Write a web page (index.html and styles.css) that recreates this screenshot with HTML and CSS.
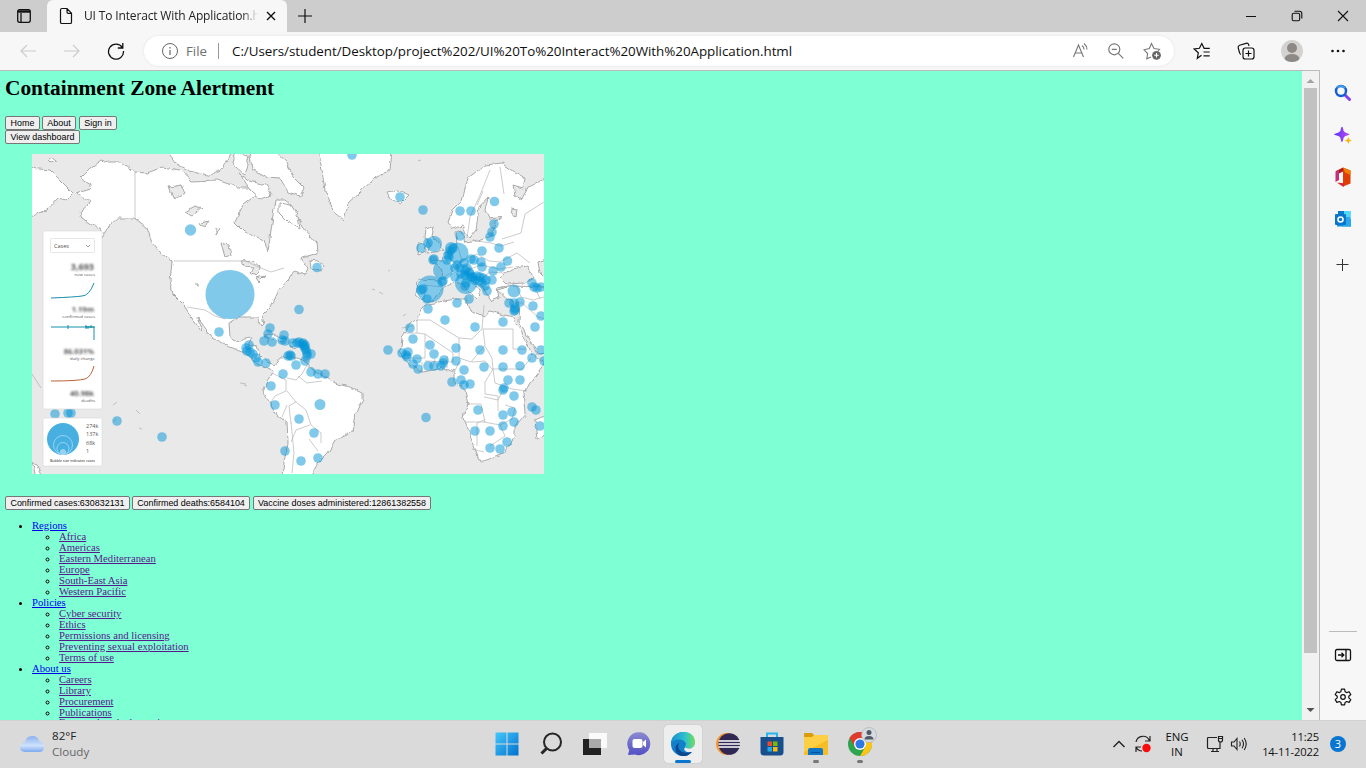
FILE: index.html
```html
<!DOCTYPE html>
<html lang="en">
<head>
<meta charset="utf-8">
<title>UI To Interact With Application</title>
<link rel="stylesheet" href="styles.css">
</head>
<body>
<div class="screen">
<header class="tabstrip">
  <div class="tab-menu"><svg width="16" height="16" viewBox="0 0 16 16" fill="none" stroke="#111" stroke-width="1.3"><rect x="1.7" y="1.7" width="12.6" height="12.6" rx="2"/><path d="M2 3.5h12" stroke-width="2.4"/><path d="M5 5v9"/></svg></div>
  <div class="tab">
    <svg width="14" height="18" viewBox="0 0 14 18" fill="none" stroke="#111" stroke-width="1.2"><path d="M3 1.5h5l4.5 4.7v9q0 1.3-1.3 1.3H3q-1.5 0-1.5-1.3V3q0-1.5 1.5-1.5zM8 1.500V5q0 1.400 1.300 1.400h3"/></svg>
    <span class="tab-title">UI To Interact With Application.html</span>
    <svg class="tab-close" width="10" height="10" viewBox="0 0 10 10" stroke="#111" stroke-width="1.4"><path d="M1 1l8 8M9 1L1 9"/></svg>
  </div>
  <svg class="new-tab" width="16" height="16" viewBox="0 0 16 16" stroke="#111" stroke-width="1.2"><path d="M8 1v14M1 8h14"/></svg>
  <div class="window-buttons">
    <span><svg width="12" height="12" viewBox="0 0 12 12" stroke="#111" stroke-width="1"><path d="M1 6.5h10"/></svg></span>
    <span><svg width="12" height="12" viewBox="0 0 12 12" fill="none" stroke="#111" stroke-width="1.1"><rect x="1.2" y="3.2" width="7.5" height="7.5" rx="1.5"/><path d="M3.5 1.2h5q2.3 0 2.3 2.3v5"/></svg></span>
    <span><svg width="12" height="12" viewBox="0 0 12 12" stroke="#111" stroke-width="1.1"><path d="M1 1l10 10M11 1L1 11"/></svg></span>
  </div>
</header>

<nav class="toolbar">
  <span class="nav-cell"><svg width="18" height="14" viewBox="0 0 18 14" fill="none" stroke="#ccc" stroke-width="1.2"><path d="M17 7H2M8 1L2 7l6 6"/></svg></span>
  <span class="nav-cell"><svg width="18" height="14" viewBox="0 0 18 14" fill="none" stroke="#ccc" stroke-width="1.2"><path d="M1 7h15M10 1l6 6-6 6"/></svg></span>
  <span class="nav-cell"><svg width="18" height="18" viewBox="0 0 18 18" fill="none" stroke="#111" stroke-width="1.3"><path d="M15.3 5.500A7.500 7.500 0 1 0 16.500 9M15.800 1v5h-5"/></svg></span>
  <div class="address">
    <svg width="18" height="18" viewBox="0 0 18 18" fill="none" stroke="#666" stroke-width="1"><circle cx="9" cy="9" r="7.5"/><path d="M9 8v5M9 5v1.4" stroke-width="1.2"/></svg>
    <span class="scheme">File</span><i class="divider"></i>
    <span class="url">C:/Users/student/Desktop/project%202/UI%20To%20Interact%20With%20Application.html</span>
    <div class="address-tools">
      <svg width="18" height="18" viewBox="0 0 18 18" fill="none" stroke="#777" stroke-width="1.1"><path d="M2.500 15L7.500 3l5 12M4.300 11h6.400M11 3.500q2 1.500 2 4M13 1.500q3 2.500 3 6"/></svg>
      <svg width="18" height="18" viewBox="0 0 18 18" fill="none" stroke="#777" stroke-width="1.2"><circle cx="7.300" cy="7.300" r="5.500"/><path d="M11.300 11.300l5 5M4.800 7.300h5"/></svg>
      <svg width="18" height="18" viewBox="0 0 18 18" fill="none" stroke="#777" stroke-width="1.1"><path d="M8 15l-4.200 1.800.8-5.300L1 7.800l5.300-1.300L8.500 1.500l2.500 5 5.500.8-1.500 1.700"/><circle cx="13.500" cy="13.300" r="4.400" fill="#666" stroke="none"/><path d="M13.500 11v4.600M11.200 13.300h4.600" stroke="#fff"/></svg>
    </div>
  </div>
  <div class="toolbar-actions">
    <svg width="18" height="18" viewBox="0 0 18 18" fill="none" stroke="#111" stroke-width="1.2"><path d="M8.500 13.300l-4.200 3 1-5.500L1.200 7l5.200-.7L8.800 1.500l2.300 4.800h5.700M10.500 10h6.200M10.500 13.800h6.200"/></svg>
    <svg width="18" height="18" viewBox="0 0 18 18" fill="none" stroke="#111" stroke-width="1.2"><rect x="6" y="6" width="11" height="11" rx="2.3"/><path d="M11.500 8.500v6M8.500 11.500h6M4 12.500Q2.800 12 2.500 10.500L1.200 5.800Q.8 3.800 2.600 3.200L9 1.300q2-.5 2.700 1.300L12 4"/></svg>
    <svg width="22" height="22" viewBox="0 0 22 22"><defs><clipPath id="avatar"><circle cx="11" cy="11" r="11"/></clipPath></defs><g clip-path="url(#avatar)"><path fill="#d4d2d0" d="M0 0h22v22H0z"/><circle cx="11" cy="8" r="5" fill="#8d8986"/><ellipse cx="11" cy="19" rx="7.5" ry="5" fill="#8d8986"/></g></svg>
    <svg width="16" height="4" viewBox="0 0 16 4" fill="#111"><circle cx="2.5" cy="2" r="1.3"/><circle cx="8" cy="2" r="1.3"/><circle cx="13.5" cy="2" r="1.3"/></svg>
  </div>
</nav>

<div class="workspace">
<main class="page">
  <h1>Containment Zone Alertment</h1>
  <div class="row row-menu"><button class="b-home">Home</button><button class="b-about">About</button><button class="b-sign">Sign in</button></div>
  <div class="row"><button class="b-view">View dashboard</button></div>
  <figure class="map">
  <svg width="512" height="320" viewBox="32 154 512 320">
    <defs>
      <filter id="coast" x="0" y="0" width="100%" height="100%"><feTurbulence type="fractalNoise" baseFrequency=".14" numOctaves="2" seed="4"/><feDisplacementMap in="SourceGraphic" scale="5" xChannelSelector="R" yChannelSelector="G"/><feGaussianBlur stdDeviation=".3"/></filter>
      <filter id="smudge" x="-20%" y="-40%" width="140%" height="180%"><feGaussianBlur stdDeviation="1.3"/></filter>
    </defs>
    <path fill="#e9e9e9" d="M32 154h512v320H32z"/>
    <g class="land" filter="url(#coast)">
      <path d="M28 168L50 170 63 183 73 193 66 200 58 198 47 210 28 218zM48 160l4-3 5 4-6 2z"/>
      <path d="M135 172L122 162 108 162 101 160 90 168 80 178 91 185 90 189 76 193 83 198 91 202 80 212 82 218 92 225 100 228 102 237 110 225 118 218 135 218 147 228 152 242 160 252 172 262 170 280 173 295 185 307 190 315 193 320 202 332 203 331 197 317 203 325 212 338 230 347 243 352 252 358 258 365 267 367 273 370 272 374 267 382 263 392 270 403 277 415 287 422 288 443 285 457 281 480 313 480 313 470 318 463 328 453 335 440 352 432 355 413 363 400 363 393 352 388 335 383 327 377 313 370 307 363 298 358 290 357 280 358 275 365 267 362 260 355 257 347 248 345 252 337 243 338 238 342 230 337 229 323 238 317 257 317 262 327 264 325 262 315 270 307 278 290 290 279 295 271 305 275 308 268 301 258 318 253 317 243 303 227 298 217 291 205 285 200 275 200 272 223 268 252 264 240 245 232 235 222 243 205 256 195 257 187 237 187 217 180 192 181 180 170 163 167 147 173z"/>
      <path d="M166 150L177 164 190 171 208 176 222 169 232 153zM235 150L232 164 244 174 249 157zM249 150L252 169 266 177 280 178 288 192 300 196 304 188 293 177 287 162 274 150zM240 174l10 7 16 4 6 10-12 4-9-8zM279 203l12 2 7 11 2 13-12-7-9-9z"/>
      <path d="M318 150L322 170 325 190 335 213 344 221 348 203 360 192 375 178 390 170 392 150z"/>
      <path d="M387 192l11-2 11 5-9 9-9-4zM310 260l8 1 6 5-2 5-11-3zM264 336l9-2 13 6-4 2zM289 343l10-1 5 4-12 2z"/>
      <path d="M426 229l8-3-2 9 8 10 3 6-16 2 4-7-6-9zM418 244l7-1 1 8-9 3z"/>
      <path d="M448 222L452 210 462 200 468 178 485 165 502 163 515 172 525 178 523 188 513 185 515 195 522 200 528 187 549 176V288L530 291 508 286 497 288 499 298 492 301 480 284 471 280 481 294 476 299 463 284 455 282 443 288 433 300 425 302 416 295 418 280 441 281 442 270 430 259 441 261 445 253 457 246 456 232 461 230 465 243 478 241 492 236 495 222 502 217 489 219 485 210 488 197 479 207 476 230 469 239 463 226 452 229z"/>
      <path d="M497 290L512 286 549 287V352L537 353 519 321 520 302 508 300z"/>
      <path d="M424 305L455 299 467 299 470 310 485 317 490 311 500 314 513 317 523 335 532 354 544 364 530 383 524 393 526 413 515 427 515 437 502 455 480 463 472 440 463 417 468 403 465 390 455 382 455 373 445 368 422 372 408 363 400 352 403 333 417 318z"/>
      <path d="M535 420l14-6v20l-12 6zM32 462l5 4 4 8-5 3z"/>
      <g fill="#e9e9e9"><path d="M500 277l11-8 16-3 7 12-9 5-18 1zM538 262l8-3v20l-6-6zM512 208l5 1-1 8-5-3zM169 187l13-2 3 8-12 5zM185 212l10-6 7 2-10 8zM199 224l9-3-3 6zM216 228l4 1-4 6zM221 243l8 2 2 10-6 2zM241 262l12-1 7 6-2 8-7-2 3-5-10-1zM256 278l9-2-6 6zM195 284h3v3z"/></g>
    </g>
    <g class="borders">
      <path d="M135 171v48l9 6M174 261h72l10 5 15 6 13-4M187 307l18 3 10 6 10 3"/>
      <path d="M272 373l14 7v11l-11 5-5 8M287 378l9 2 6-6 5-9M298 376l9 7 15-2M287 391l9 11 10 8 5 15 10 8v10M287 405l-5 12M291 422l3 31-2 20M310 425l-14 5-5 12M318 451l-9-12M296 402l-7 4 2 17"/>
      <path d="M403 333h14v-13h13l29 18 13 1 10-10 2-24M417 333l8 1v24h-18M425 334l28 19v9l-28-1M459 338v20l12 4 14-17-2-16h30v20h13M472 362l13-1 7 8h30l9-11M485 346l7 12 1 11-8 13v12l13 2v15M459 362l-5 11M422 362v9M435 359l-3 11M447 356v12M493 369l2 14 17 6 15 2M503 390l-5 10-14-3M467 404h14l4 18h-20M484 420l-7 3v23M484 422l16 3 12-6 3-11-10-3M500 425l5 11-15 10M472 449l12 3"/>
      <path d="M467 238l3-21 10-22 10-25M477 205l6-14M500 167l4 27M502 239l19-6 4-19 19-12M478 241l13 2 10 3 13-4M458 247l4 14-10 7M445 254l14 13-16 11M460 261l17-7 12 7 11 1 17-9 13 10M465 271l16-6 18 4 14-2M478 281l12-9 14 1M424 285l18 2M426 285l-2 14M517 287l4 10 12 3 11-3M521 302l17 15 8 2M535 287l5 12"/>
    </g>
    <g class="islands"><path d="M372 289l3 1m4 2l4 2m5-23l2-1m13 46l3-2m-4 14l5-1 3-1 3 0M113 405l4-3m19 8l4 4M32 374l9 14m75 31l-2 3m25 6l3 1M240 383l6 1m-2 1l3 1M418 161l3-1"/></g>
    <g fill="#0293d8" fill-opacity=".5">
      <circle cx="230" cy="294.500" r="24.500"/><circle cx="430" cy="289" r="13.500"/><circle cx="458" cy="253" r="10.500"/><circle cx="443" cy="270" r="10"/><circle cx="466" cy="283" r="11"/><circle cx="434" cy="244" r="8"/><circle cx="514" cy="291" r="6.500"/><circle cx="451" cy="248" r="6"/><circle cx="190.500" cy="230" r="5.700"/><circle cx="320" cy="404.500" r="5.500"/>
    </g>
    <g id="dots" fill="#0293d8" fill-opacity=".5"></g>
    <g class="legend">
      <rect x="43" y="231" width="59" height="178" rx="1"/><rect x="43" y="418" width="59" height="48" rx="1"/>
      <rect x="50.500" y="238.500" width="44" height="14" rx="1"/><path d="M86 245l2 2 2-2" stroke="#777" stroke-width=".7" fill="none"/>
      <path d="M51 298q25-1 31-2 7 0 12-13M51 327h43M68 325v4M85 327h10M94 327v13" stroke="#168fab" fill="none"/>
      <path d="M86 325v4M88 326v3M91 325v3" stroke="#168fab"/>
      <path d="M51 381q27 0 34-2 6-2 9-13" stroke="#bd6337" fill="none"/>
    </g>
    <g class="map-text">
      <text x="54" y="248">Cases</text>
      <g text-anchor="end"><g filter="url(#smudge)"><text x="94" y="270" class="big">3,693</text><text x="94" y="312" class="mid">1.19m</text><text x="94" y="354" class="mid">86.031%</text><text x="94" y="396" class="mid">40.98k</text></g>
      <text x="95" y="276" class="tiny">new cases</text><text x="95" y="318" class="tiny">confirmed cases</text><text x="95" y="360" class="tiny">daily change</text><text x="95" y="402" class="tiny">deaths</text></g>
      <text x="86" y="428">274k</text><text x="86" y="436">137k</text><text x="86" y="445">68k</text><text x="86" y="453">1</text><text x="50" y="461.500" class="tiny note">Bubble size indicates cases</text>
    </g>
    <g fill="#48b0e1" stroke="#a5dafa" stroke-width=".8"><circle cx="63" cy="439" r="16" stroke="none"/><circle cx="63" cy="445" r="9.500"/><circle cx="63" cy="448.500" r="6"/><circle cx="63" cy="452" r="2.500" fill="#9ccfe7"/></g>
  </svg>
  </figure>
  <div class="row row-stats"><button class="b-cases">Confirmed cases:630832131</button><button class="b-deaths">Confirmed deaths:6584104</button><button class="b-doses">Vaccine doses administered:12861382558</button></div>
  <ul class="links">
    <li><a>Regions</a><ul><li><a>Africa</a></li><li><a>Americas</a></li><li><a>Eastern Mediterranean</a></li><li><a>Europe</a></li><li><a>South-East Asia</a></li><li><a>Western Pacific</a></li></ul></li>
    <li><a>Policies</a><ul><li><a>Cyber security</a></li><li><a>Ethics</a></li><li><a>Permissions and licensing</a></li><li><a>Preventing sexual exploitation</a></li><li><a>Terms of use</a></li></ul></li>
    <li><a>About us</a><ul><li><a>Careers</a></li><li><a>Library</a></li><li><a>Procurement</a></li><li><a>Publications</a></li><li class="last"><a>Frequently asked questions</a></li></ul></li>
  </ul>
</main>
<div class="scrollbar"><svg width="9" height="5" viewBox="0 0 9 5"><path d="M.5 5l4-4 4 4z" fill="#a3a3a3"/></svg><i class="thumb"></i><svg class="down" width="9" height="5" viewBox="0 0 9 5"><path d="M.5 0l4 4 4-4z" fill="#505050"/></svg></div>
<aside class="sidebar">
  <svg width="18" height="18" viewBox="0 0 18 18" fill="none"><path d="M11 11l4.500 4.500" stroke="#8b3df0" stroke-width="3" stroke-linecap="round"/><circle cx="7" cy="7" r="5" stroke="#155fd4" stroke-width="2.500"/><path d="M3 4q3-4 8 0" stroke="#3c9ae8" stroke-width="2"/></svg>
  <svg width="18" height="18" viewBox="0 0 18 18"><defs><linearGradient id="spark"><stop stop-color="#4f36f1"/><stop offset="1" stop-color="#c04cf7"/></linearGradient></defs><path fill="url(#spark)" d="M8 .8q1 0 1.500 4 .8 1.700 4.400 2.600 3.300.8 0 1.800-3.700.8-4.400 2.800Q8.900 16 8 16q-1 0-1.500-4-.7-2-4.700-2.800-3.500-.9 0-1.800Q5.700 6.500 6.500 4.800 7 .8 8 .8z"/><path fill="#f5b60a" d="M14.300 11l1 2.400 2.600 1-2.600 1-1 2.600-1-2.600-2.600-1 2.600-1z"/></svg>
  <svg width="18" height="20" viewBox="0 0 18 20"><path fill="#df3c06" d="M9 .5l7.500 3v13L9 19.500l-6-3.700 6 .7v-12z"/><path fill="#f08004" d="M9 .5l7.500 3V8L11 5.500z"/><path fill="#b31921" d="M9 .5L2 4v4l7-3.500z"/><path fill="#c62e76" d="M1.500 4.500L5 3v10l-3.500 2z"/><path fill="#e3203c" d="M4 15.500l6 1v3H9z"/></svg>
  <svg width="18" height="18" viewBox="0 0 18 18"><path fill="#28a8ea" d="M4 1h12.500v13H4z"/><path fill="#0a78c9" d="M4 1h6v6H4z"/><path fill="#50d9ff" d="M10 1h6.500v6H10z"/><path fill="#1490df" d="M3 8l9 5 5-4v7.500H3z"/><path fill="#28a8ea" d="M12 12l5 4.500H8zM12 12l5-3.500v8z"/><rect x="1" y="4" width="11" height="11" rx="1" fill="#0975cb"/><circle cx="6.500" cy="9.500" r="2.500" fill="none" stroke="#fff" stroke-width="1.600"/></svg>
  <svg class="side-add" width="14" height="14" viewBox="0 0 14 14" stroke="#333"><path d="M6.500 1v12M.5 6.500h12"/></svg>
  <i class="side-rule"></i>
  <svg width="18" height="14" viewBox="0 0 18 14" fill="none" stroke="#111" stroke-width="1.300"><rect x="1.500" y="1.500" width="15" height="11" rx="1.500"/><path d="M12 2v10M4 7h6M7.500 4.800L9.800 7 7.500 9.200"/></svg>
  <svg class="gear" width="18" height="18" viewBox="0 0 18 18" fill="none" stroke="#111" stroke-width="1.200" stroke-linejoin="round"><path d="M7.400 1.200h3.200l.5 2.500 1.600.9 2.400-.9 1.700 2.800-2 1.700v1.700l2 1.700-1.700 2.800-2.400-.9-1.600.9-.5 2.500H7.400l-.5-2.500-1.600-.9-2.400.9-1.700-2.800 2-1.700V8.200l-2-1.700 1.700-2.800 2.400.9 1.600-.9z"/><circle cx="9" cy="9" r="2.300"/></svg>
</aside>
</div>

<footer class="taskbar">
  <div class="weather">
    <svg width="24" height="17" viewBox="0 0 24 17"><defs><linearGradient id="cloud" x2="0" y2="1"><stop stop-color="#8bb1f0"/><stop offset=".6" stop-color="#cfe2fc"/><stop offset="1" stop-color="#7da9ee"/></linearGradient></defs><path fill="url(#cloud)" d="M5 16q-5-.3-5-4.500T5 6q1-6 7-6t7 5q5 1 5 6t-5 5z"/></svg>
    <p><b>82°F</b><span>Cloudy</span></p>
  </div>
  <div class="apps">
    <span><svg width="24" height="24" viewBox="0 0 24 24"><defs><linearGradient id="win" x2="1" y2="1"><stop stop-color="#46c8fb"/><stop offset="1" stop-color="#0070ce"/></linearGradient></defs><path fill="url(#win)" d="M.5.500h11v11H.5zm12 0h11v11h-11zm-12 12h11v11H.5zm12 0h11v11h-11z"/></svg></span>
    <span><svg width="24" height="24" viewBox="0 0 24 24" fill="none" stroke="#262626"><circle cx="13.500" cy="10" r="8.500" stroke-width="2"/><path d="M7.500 16.500L2.500 21.500" stroke-width="3"/></svg></span>
    <span><svg width="24" height="24" viewBox="0 0 24 24"><path fill="#222" d="M0 7h18v16H0z"/><path fill="#fafafa" d="M6 1h18v15H6z"/><path fill="#aaa" d="M6 7h12v9H6z"/></svg></span>
    <span><svg width="24" height="24" viewBox="0 0 24 24"><defs><linearGradient id="chat" x2="0" y2="1"><stop stop-color="#8b8ad0"/><stop offset="1" stop-color="#5350c5"/></linearGradient></defs><path fill="url(#chat)" d="M1 23l1.200-5A11.500 11.500 0 1 1 8 22.500z"/><rect x="5.500" y="7" width="10" height="9" rx="2" fill="#fff"/><path fill="#fff" d="M16 10l3-2.500v8L16 13z"/></svg></span>
    <span class="active"><svg width="24" height="24" viewBox="0 0 24 24"><defs><linearGradient id="edge"><stop stop-color="#168fd5"/><stop offset=".6" stop-color="#30c2cb"/><stop offset="1" stop-color="#72df55"/></linearGradient></defs><circle cx="12" cy="12" r="12" fill="#137fc8"/><path fill="url(#edge)" d="M0 11C1-3 24-4 24 10c0 6-6 8-9.500 5.500-1.500-1.200 1-2 .3-4.300C13 7 5 5.500 0 11z"/><path fill="#0d4790" d="M8 11c-3 7 4 12 13 8.500C15 28 4 24 4.500 16 4.700 13.500 6 12 8 11z"/><path fill="#eeeeef" d="M14.500 15.500C18 18 24 16 24 10v8c-1 2-2.500 2-4 2-7 1-8-4-5.500-4.500z"/></svg></span>
    <span><svg width="24" height="24" viewBox="0 0 24 24"><circle cx="11" cy="12" r="11" fill="#f4942c"/><circle cx="13.200" cy="12" r="10.800" fill="#302754"/><path d="M2.500 9h21.500M2.500 12h21.500M2.500 15h21.500" stroke="#fff" stroke-width="1.400"/></svg></span>
    <span><svg width="24" height="24" viewBox="0 0 24 24"><path d="M7 6V1.500h10V6" fill="none" stroke="#25b6ef" stroke-width="2"/><path fill="#164f8b" d="M.5 5h23v15q0 3.500-3.500 3.500H4Q.5 23.500.5 20z"/><path fill="#e94c32" d="M7.500 9.500H12V14H7.500z"/><path fill="#79b900" d="M13 9.500h4.500V14H13z"/><path fill="#25a8e9" d="M7.500 15H12v4.500H7.500z"/><path fill="#fcba11" d="M13 15h4.500v4.500H13z"/></svg></span>
    <span class="running"><svg width="24" height="24" viewBox="0 0 24 24"><path fill="#d89d08" d="M0 5V2q0-1 1-1h7l2 2v3z"/><path fill="#fccf45" d="M0 5h8l2-2h14v20H0z"/><path fill="#f7bd24" d="M0 20L24 8v15H0z"/><path fill="#1076c8" d="M4 23v-5q0-2 2-2h11q2 0 2 2v5z"/><path stroke="#0a519c" d="M7 20.500h9"/></svg></span>
    <span class="running"><svg width="24" height="24" viewBox="0 0 24 24"><circle cx="12" cy="12" r="12" fill="#2ca450"/><path fill="#e23b2e" d="M1.600 6A12 12 0 0 1 22.400 6H12l-5.200 9z"/><path fill="#fbc516" d="M22.400 6A12 12 0 0 1 12 24l5.200-9L12 6z"/><circle cx="12" cy="12" r="6" fill="#fff"/><circle cx="12" cy="12" r="4.600" fill="#2d78e7"/></svg><svg class="profile" width="16" height="16" viewBox="0 0 16 16"><circle cx="8" cy="8" r="7.500" fill="#d7dbe0" stroke="#aaa" stroke-width=".6"/><circle cx="8" cy="5.500" r="2.500" fill="#4f5967"/><path fill="#4f5967" d="M3.500 12.500q0-3.500 4.500-3.500t4.500 3.500z"/></svg></span>
  </div>
  <div class="tray">
    <svg width="14" height="10" viewBox="0 0 14 10" fill="none" stroke="#222" stroke-width="1.400"><path d="M1.500 8L7 2.500 12.500 8"/></svg>
    <svg class="sync" width="18" height="18" viewBox="0 0 18 18" fill="none"><path stroke="#222" stroke-width="1.200" d="M2 7A7 7 0 0 1 15.500 6M16 1v5h-5M2 17v-5h5M2 12q2 4 6 4"/><circle cx="12.500" cy="13" r="4.200" fill="#fb0a0a"/></svg>
    <p class="lang"><span>ENG</span><span>IN</span></p>
    <svg class="net" width="18" height="18" viewBox="0 0 18 18" fill="none" stroke="#222" stroke-width="1.200"><path d="M11 2.500H2.500Q1.500 2.500 1.500 3.500v9q0 1 1 1H14V7M5 16.500h8M7 14v2.500M11 14v2.500M12.500 1.500h4V5q0 2-2 2t-2-2zM12.500 3.500h4"/></svg>
    <svg class="sound" width="18" height="16" viewBox="0 0 18 16" fill="none" stroke="#222" stroke-width="1.100"><path d="M1.500 6h2.500l3-3.500v11L4 10H1.500zM9.500 5.500q1.500 2.500 0 5M12 3.700q3 4.300 0 8.600M14.200 2q4 6 0 12"/></svg>
    <p class="clock"><span>11:25</span><span>14-11-2022</span></p>
    <span class="badge">3</span>
  </div>
</footer>
</div>
<script src="map.js"></script>
</body>
</html>
```
FILE: map.js
```js
const bubbles = [
  [352,155],[400,197],[423,210],[460,211],[471,211],[494.5,201.5],[494,224],[492,232],[490,237],[460,236],
  [421,248],[428,243],[433,260],[434,259],[482,251],[499,248],[507.5,261],[481,262],[482,267],[471,259],[474,260],[493,271],[501,267],[492,280],
  [448,255],[449,257],[447,260],[453,248],[457,265],[460,268],[464,263],[465,270],[469,272],[470,274],[473,277],[477,276],[479,281],[483,278],[486,280],[482,283],[485,286],[487,291],[465,275],[466,283],[455,277],[443,281],[442,282],[421,290],[423,289],[427,299],
  [450,251],[455,268],[461,274],[467,268],[471,277],[475,280],[480,277],[465,286],
  [428,309],[457,303],[469,299],[317,267.5],[299,309.5],[445,320],[475,327],[503,322],[410,328],[413,339],[430,345],[434,354],[456,348],[480,350],[503,350],[456,361],[484,367],[503,367],[520,366],[522,350],[532,358],[520,380],[508,380],[504,388],[503,390],[514,396],[478,410],[503,415],[512,412],[514,422],[503,426],[490,431],[475,431],[490,448],[500,449],[507,442],
  [532,407],[536,410],[540,426],[535,327],[541,316],[541,350],[544,361],[532,283],[534,287],[537,288],[541,287],[509,303],[514,303],[520,302],[515,308],[515,310],[514,311],[533,306],
  [388,350],[402,353],[406,355],[408,352],[407,357],[413,364],[417,359],[418,369],[428,366],[434,366],[441,366],[443,363],[444,360],[464,370],[452,382],[461,380],[464,385],[470,384],[426,417.5],
  [219,332],[246,348],[249,345],[247,351],[253,354],[256,358],[258,362],[266,363],[250,352],[264,341],[268,334],[270,328],[272,342],[284,335],[282,340],[285,341],[293,343],[297,343],[299,342],[302,344],[303,343],[304,346],[305,345],[305,348],[306,350],[307,353],[307,356],[311,354],[305,361],[290,355],[288,356],[291,356],[283,374],[271,386],[275,405],[296,365],[311,372],[318,374],[325,374],[299,419],[314,433],[285,451],[301,461],[318,458],
  [117,421],[162,437],[55,414],[68,413],[71,413]
];
document.getElementById("dots").innerHTML = bubbles
  .map(([x, y]) => `<circle cx="${x}" cy="${y}" r="4.8"/>`)
  .join("");
```
FILE: styles.css
```css
* { box-sizing: border-box; }
body { margin: 0; font-family: "Open Sans", "Noto Sans", sans-serif; }
svg { display: block; flex: none; }
p { margin: 0; }
.screen { display: flex; flex-direction: column; width: 1366px; height: 768px; overflow: hidden; background: #f7f7f7; }
.tabstrip { display: flex; align-items: center; height: 32px; background: #cdcdcd; flex: none; }
.tab-menu { width: 47px; display: flex; justify-content: center; }
.tab { display: flex; align-items: center; width: 240px; height: 32px; padding-left: 12px; background: #f7f7f7; border-radius: 6px 6px 0 0; }
.tab-title { width: 174px; margin: -1px 8px 0 11px; font-size: 12px; letter-spacing: -.15px; white-space: nowrap; overflow: hidden; color: #222; mask-image: linear-gradient(90deg, #000 158px, transparent 174px); }
.new-tab { margin-left: 10px; }
.window-buttons { display: flex; margin-left: auto; }
.window-buttons span { width: 46px; display: flex; justify-content: center; }
.toolbar { display: flex; align-items: center; height: 38px; padding-left: 6px; flex: none; }
.nav-cell { width: 44px; display: flex; justify-content: center; }
.address { display: flex; align-items: center; width: 1030px; height: 30px; margin-left: 6px; padding: 0 13px 0 17px; border-radius: 15px; background: #fff; box-shadow: 0 0 3px #e2e2e2; }
.scheme { width: 24px; margin-left: 7px; font-size: 13.3px; color: #707070; }
.divider { width: 1px; height: 16px; margin: 0 13px 0 8px; background: #999; }
.url { font-size: 13.4px; letter-spacing: -.04px; color: #111; white-space: nowrap; }
.address-tools { display: flex; gap: 18px; margin-left: auto; }
.toolbar-actions { display: flex; align-items: center; gap: 26px; margin-left: 19px; }
.toolbar-actions svg:nth-child(4) { margin-left: 1px; }
.workspace { display: flex; height: 650px; flex: none; }
.page { width: 1302px; border-top: 1px solid #bbb; background: #7fffd4; padding: 0 5px; overflow: hidden; }
h1 { margin: 5px 0 16px; font: bold 21.4px/24px "Liberation Serif", serif; letter-spacing: -.02px; white-space: nowrap; }
.row { display: flex; height: 14px; }
.row-menu, .row-stats { gap: 2px; }
button { height: 14px; padding: 0; border: 1px solid #767676; border-radius: 2px; background: #efefef; color: #000; font: 8.93px/11px "Liberation Sans", sans-serif; white-space: nowrap; }
.b-home { width: 35px; }
.b-about { width: 34px; }
.b-sign { width: 38px; margin-left: 1px; }
.b-view { width: 75px; }
.b-cases { width: 125px; }
.b-deaths { width: 118px; }
.b-doses { width: 178px; margin-left: 1px; }
.map { margin: 10px 0 22px 27px; }
.land { fill: #fff; stroke: #a9a9a9; stroke-width: 1; }
.borders { fill: none; stroke: #b5b5b5; stroke-width: .7; }
.islands { fill: none; stroke: #b5b5b5; stroke-width: .8; }
.legend rect { fill: #fff; stroke: #d7d7d7; stroke-width: .6; }
.map-text { fill: #555; font: 5.5px "Open Sans", sans-serif; }
.map-text .big { font-size: 9px; font-weight: bold; }
.map-text .mid { font-size: 7.5px; font-weight: bold; }
.map-text .tiny { font-size: 4.3px; }
.map-text .note { font-size: 3.6px; fill: #222; }
.links, .links ul { margin: 0; padding-left: 27px; }
.links { margin-top: 10px; font: 10.67px/11px "Liberation Serif", serif; list-style: disc; }
.links ul { list-style: circle; }
.links .last { line-height: 9px; }
.links a { color: #0000ee; text-decoration: underline; }
.links ul a { color: #551a8b; }
.scrollbar { display: flex; flex-direction: column; align-items: center; width: 18px; padding: 7px 0; border-top: 1px solid #bbb; border-right: 1px solid #bbb; background: #f1f1f1; }
.thumb { width: 13px; height: 565px; margin-top: 5px; background: #c1c1c1; }
.down { margin-top: auto; }
.sidebar { display: flex; flex-direction: column; align-items: center; width: 46px; padding: 14px 0; gap: 24px; }
.sidebar svg:nth-child(3) { margin: -1px 0; }
.side-add { margin-top: 6px; }
.side-rule { width: 28px; height: 1px; margin-top: auto; margin-bottom: -8px; background: #bbb; }
.gear { margin-top: 2px; }
.taskbar { display: flex; align-items: center; height: 48px; padding-bottom: 1px; background: #dadada; border-top: 1px solid #d1d1d1; flex: none; }
.weather { display: flex; align-items: center; width: 485px; padding-left: 20px; gap: 8px; font-size: 11.6px; }
.weather b, .weather span { display: block; font-weight: normal; line-height: 16px; color: #222; }
.weather span { color: #666; }
.apps { display: flex; }
.apps > span { position: relative; display: flex; align-items: center; justify-content: center; width: 38px; height: 38px; margin: 0 3.05px; border-radius: 4px; }
.apps .active { background: #eeeeef; box-shadow: 0 0 1px #999; }
.active::after, .running::after { content: ""; position: absolute; bottom: 0; width: 16px; height: 3px; border-radius: 2px; background: #0876d1; }
.running::after { width: 6px; background: #777; }
.profile { position: absolute; left: 20px; top: 2px; }
.tray { display: flex; align-items: center; margin-left: auto; padding-right: 20px; color: #111; }
.tray p span { display: block; line-height: 15.500px; white-space: nowrap; }
.sync { margin-left: 8px; }
.lang { width: 26px; margin-left: 12px; font-size: 11.4px; text-align: center; }
.net { margin-left: 16px; }
.sound { margin-left: 6px; }
.clock { width: 60px; margin-left: 11px; font-size: 11.2px; letter-spacing: -.15px; }
.tray .clock span { display: flex; justify-content: flex-end; }
.badge { width: 16px; height: 16px; margin-left: 11px; border-radius: 8px; background: #0876d1; color: #fff; font-size: 11px; line-height: 16px; text-align: center; }
```
